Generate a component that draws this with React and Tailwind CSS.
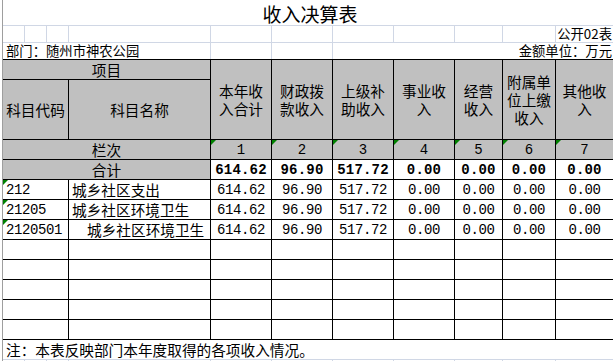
import React from "react";

const heads = [
  ["本年收", "入合计"],
  ["财政拨", "款收入"],
  ["上级补", "助收入"],
  ["事业收", "入"],
  ["经营", "收入"],
  ["附属单", "位上缴", "收入"],
  ["其他收", "入"],
];

const rows = [
  { code: "212", name: "城乡社区支出", indent: false, vals: ["614.62", "96.90", "517.72", "0.00", "0.00", "0.00", "0.00"] },
  { code: "21205", name: "城乡社区环境卫生", indent: false, vals: ["614.62", "96.90", "517.72", "0.00", "0.00", "0.00", "0.00"] },
  { code: "2120501", name: "城乡社区环境卫生", indent: true, vals: ["614.62", "96.90", "517.72", "0.00", "0.00", "0.00", "0.00"] },
];

const totals = ["614.62", "96.90", "517.72", "0.00", "0.00", "0.00", "0.00"];

// little green marker excel puts on "number stored as text" cells
function Tri() {
  return (
    <span className="absolute left-0 top-0 w-0 h-0 border-t-[5px] border-r-[5px] border-t-[#008000] border-r-transparent" />
  );
}

export default function App() {
  return (
    <div className="w-[613px] h-[361px] overflow-hidden bg-white pl-[2px] text-black font-['Noto_Sans_CJK_SC',sans-serif]">
      <div className="h-full border-l border-[#9e9e9e]">

        {/* Sheet top: title + meta */}
        <div className="grid grid-cols-[21px_21px_21px_141px_60px_60px_60px_60px_47px_52px_1fr] grid-rows-[25px_16px_16px] gap-px bg-[#d0d7e5]">
          <div className="col-span-11 bg-white flex items-center justify-center pl-[4px] pt-[3px] text-[19px] leading-[22px]">
            收入决算表
          </div>
          {Array.from({ length: 10 }).map((_, i) => (
            <div key={i} className="bg-white" />
          ))}
          <div className="bg-white text-right pr-[1px] text-[13.33px] leading-[16px] whitespace-nowrap">
            公开02表
          </div>
          <div className="col-span-4 bg-white pl-[3px] text-[13.33px] leading-[16px] whitespace-nowrap">
            部门：随州市神农公园
          </div>
          <div className="bg-white" />
          <div className="bg-white" />
          <div className="col-span-5 bg-white text-right pr-[1px] text-[13.33px] leading-[16px] whitespace-nowrap">
            金额单位：万元
          </div>
        </div>

        {/* Main table */}
        <div className="grid grid-cols-[65px_141px_60px_60px_60px_60px_47px_52px_1fr] grid-rows-[19px_59px_repeat(10,19px)] gap-px bg-black border-y border-black text-[14.67px]">
          <div className="col-span-2 bg-[#c0c0c0] flex items-center justify-center leading-[19px]">
            项目
          </div>
          {heads.map((lines, i) => (
            <div
              key={i}
              className="row-span-2 bg-[#c0c0c0] flex flex-col items-center justify-center leading-[18px]"
            >
              {lines.map((l, j) => (
                <span key={j}>{l}</span>
              ))}
            </div>
          ))}
          <div className="col-start-1 row-start-2 bg-[#c0c0c0] flex items-center justify-center">
            科目代码
          </div>
          <div className="col-start-2 row-start-2 bg-[#c0c0c0] flex items-center justify-center">
            科目名称
          </div>

          {/* 栏次 */}
          <div className="col-span-2 bg-[#c0c0c0] flex items-center justify-center leading-[19px]">
            栏次
          </div>
          {[1, 2, 3, 4, 5, 6, 7].map(n => (
            <div
              key={n}
              className="relative bg-[#c0c0c0] flex items-center justify-center font-['Liberation_Mono',monospace] text-[14px] leading-[19px] pt-[2px]"
            >
              <Tri />
              {n}
            </div>
          ))}

          {/* 合计 */}
          <div className="col-span-2 bg-[#c0c0c0] flex items-center justify-center leading-[19px]">
            合计
          </div>
          {totals.map((v, i) => (
            <div
              key={i}
              className="bg-white flex items-center justify-center font-['Liberation_Mono',monospace] font-bold tracking-[0.2px] text-[14px] leading-[19px] pt-[1px]"
            >
              {v}
            </div>
          ))}

          {/* Data rows */}
          {rows.map(r => (
            <React.Fragment key={r.code}>
              <div className="relative bg-white flex items-center pl-[3px] font-['Liberation_Mono',monospace] tracking-[-0.4px] text-[14px] leading-[19px] pt-[1px]">
                <Tri />
                {r.code}
              </div>
              <div
                className={
                  r.indent
                    ? "bg-white flex items-center pl-[18px] leading-[19px] whitespace-nowrap"
                    : "bg-white flex items-center pl-[3px] leading-[19px] whitespace-nowrap"
                }
              >
                {r.name}
              </div>
              {r.vals.map((v, i) => (
                <div
                  key={i}
                  className="bg-white flex items-center justify-center font-['Liberation_Mono',monospace] tracking-[-0.4px] text-[14px] leading-[19px] pt-[1px]"
                >
                  {v}
                </div>
              ))}
            </React.Fragment>
          ))}

          {/* Empty rows */}
          {Array.from({ length: 45 }).map((_, i) => (
            <div key={i} className="bg-white" />
          ))}
        </div>

        {/* Note */}
        <div className="h-[20px] border-b border-[#d0d7e5] pl-[3px] text-[14.67px] leading-[19px] whitespace-nowrap">
          注：本表反映部门本年度取得的各项收入情况。
        </div>

        {/* next sheet row, mostly cut off */}
        <div className="grid grid-cols-[21px_21px_21px_141px_60px_60px_60px_60px_47px_52px_1fr] h-[10px] gap-x-px bg-[#d0d7e5]">
          {Array.from({ length: 11 }).map((_, i) => (
            <div key={i} className="bg-white" />
          ))}
        </div>
      </div>
    </div>
  );
}
